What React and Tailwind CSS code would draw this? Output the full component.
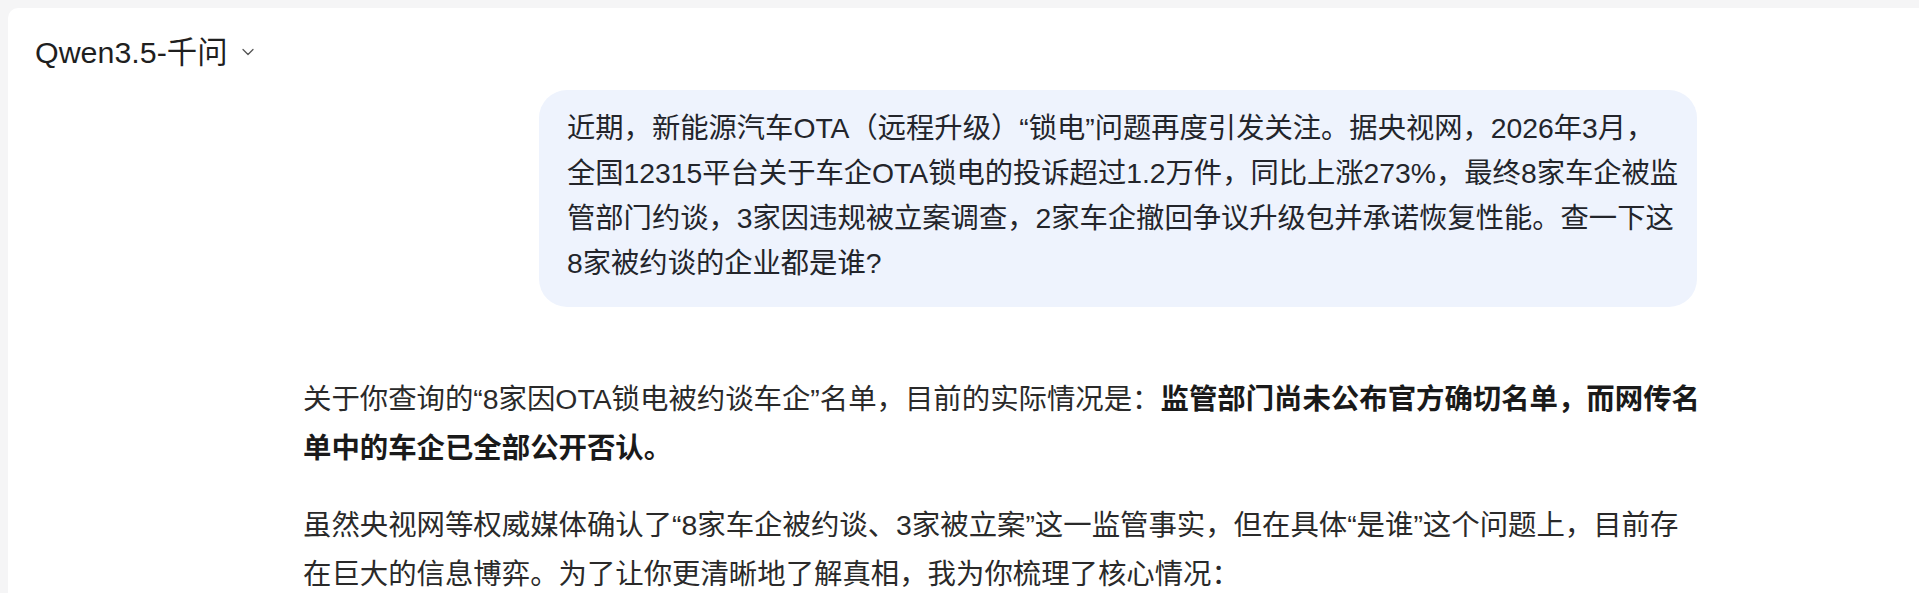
import React from "react";
import { ChevronDown } from "lucide-react";

const font = { fontFamily: '"Liberation Sans", "Noto Sans CJK SC", sans-serif' };

const App = () => {
    return (
        <div className="min-h-[593px] bg-[#f5f5f6] pl-2 pt-2 overflow-hidden" style={font}>
            <div className="min-h-[585px] bg-white rounded-tl-[10px]">
                {/* Header */}
                <div className="pl-[27px] pt-[23px] flex items-center h-[65px]">
                    <span className="text-[30.4px] leading-[42px] text-[#1f1f1f]">Qwen3.5-千问</span>
                    <ChevronDown size={20} strokeWidth={1.5} className="ml-[10px] text-[#555]" />
                </div>

                <div className="ml-[295px] w-[1394px] pt-[17px]">
                    {/* User bubble */}
                    <div className="flex justify-end">
                        <div className="w-[1158px] bg-[#eef3fd] rounded-[28px] px-[28px] pt-[16px] pb-[21px] text-[28.3px] leading-[45px] text-[#23252b] whitespace-nowrap">
                            近期，新能源汽车OTA（远程升级）“锁电”问题再度引发关注。据央视网，2026年3月，<br />
                            全国12315平台关于车企OTA锁电的投诉超过1.2万件，同比上涨273%，最终8家车企被监<br />
                            管部门约谈，3家因违规被立案调查，2家车企撤回争议升级包并承诺恢复性能。查一下这<br />
                            8家被约谈的企业都是谁?
                        </div>
                    </div>

                    {/* Answer */}
                    <div className="mt-[68px] text-[28.4px] leading-[49px] text-[#2a2a2a] whitespace-nowrap">
                        <p className="mb-[28px]">
                            关于你查询的“8家因OTA锁电被约谈车企”名单，目前的实际情况是：<strong className="font-semibold text-[#1a1a1a]">监管部门尚未公布官方确切名单，而网传名<br />单中的车企已全部公开否认。</strong>
                        </p>
                        <p>
                            虽然央视网等权威媒体确认了“8家车企被约谈、3家被立案”这一监管事实，但在具体“是谁”这个问题上，目前存<br />
                            在巨大的信息博弈。为了让你更清晰地了解真相，我为你梳理了核心情况：
                        </p>
                    </div>
                </div>
            </div>
        </div>
    );
};

export default App;
